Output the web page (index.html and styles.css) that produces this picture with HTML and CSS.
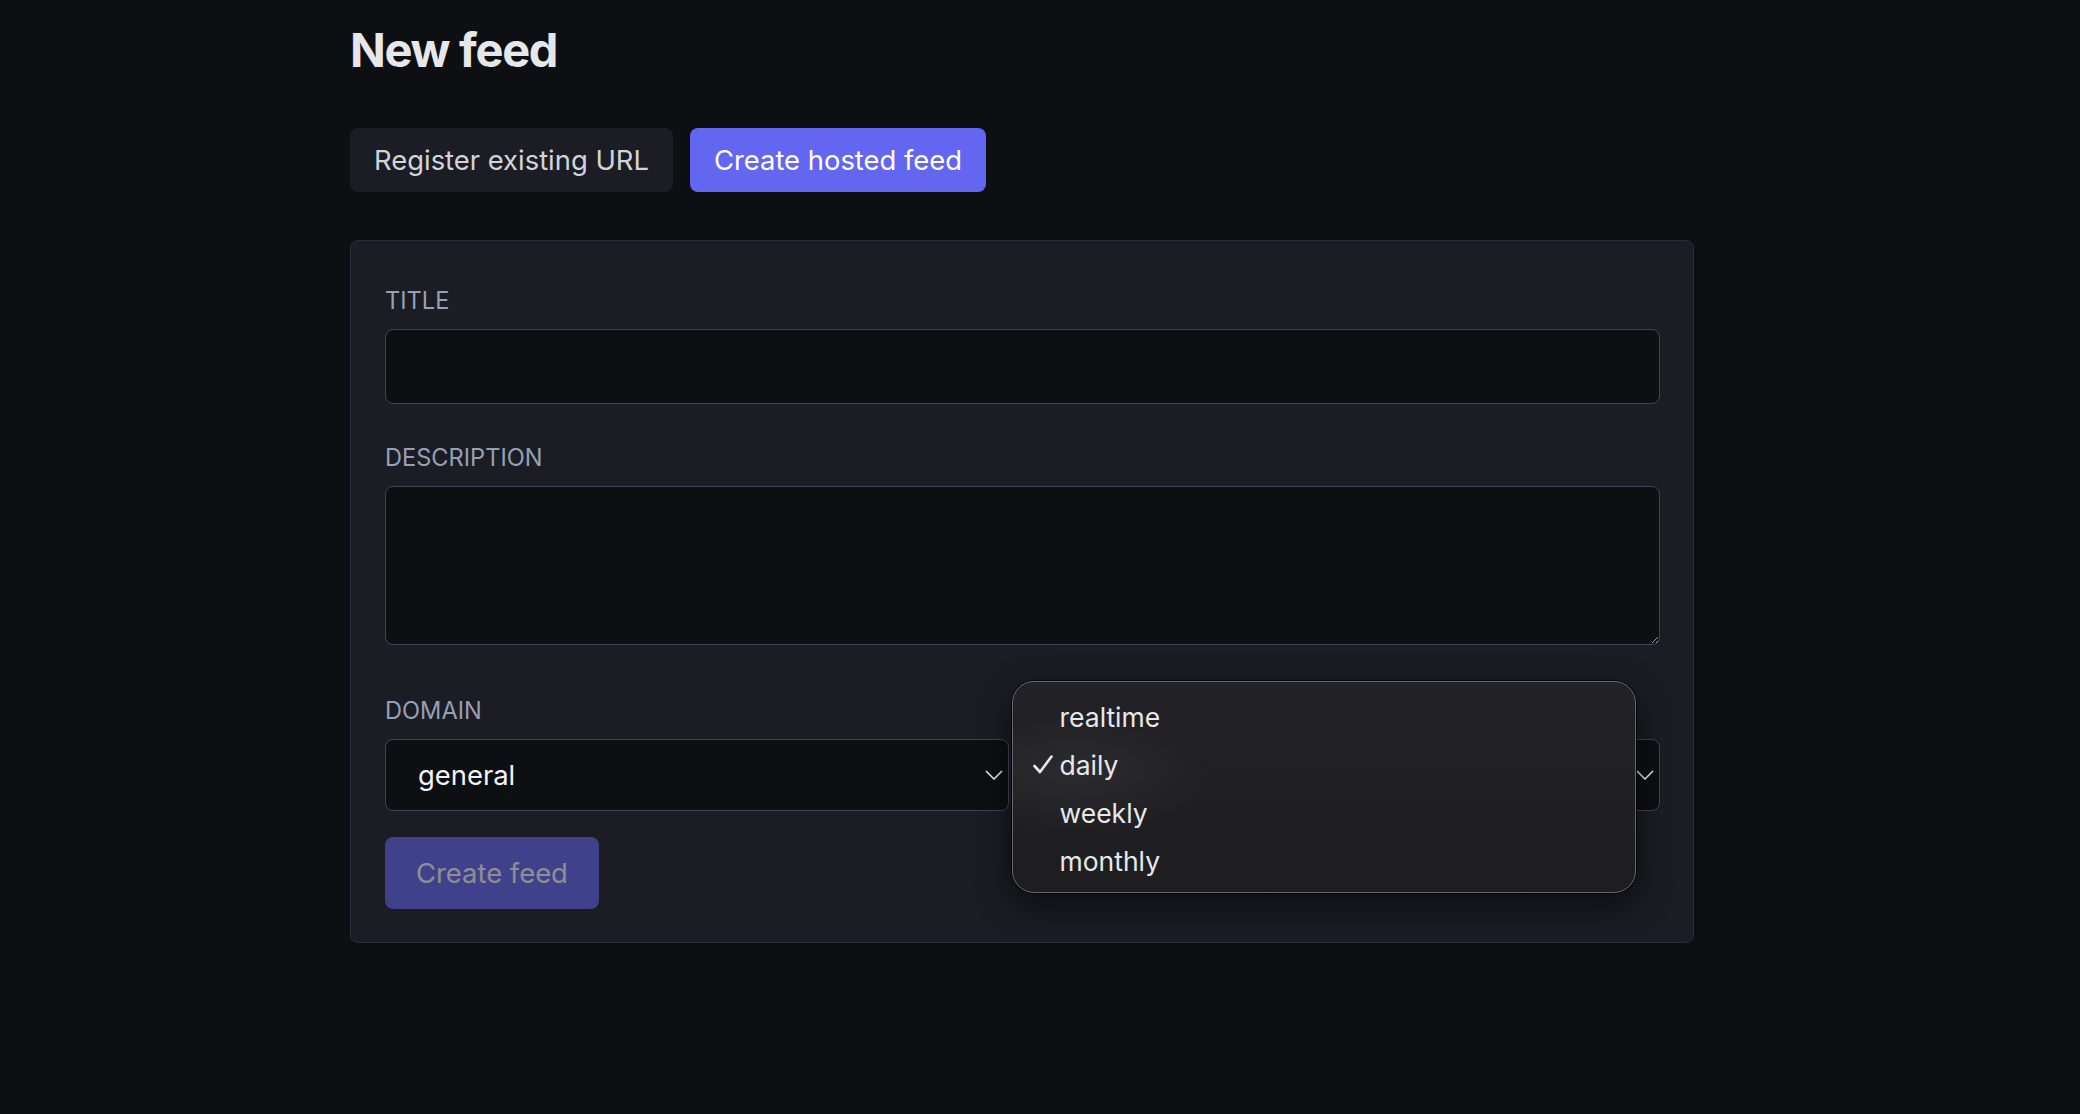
FILE: index.html
```html
<!DOCTYPE html>
<html>
 <head>
 	<title>New feed</title>
 	<link rel="stylesheet" href="styles.css">
 </head>
 <body>
 	<main class="page">
 		<h1 class="page-title">New feed</h1>
 		<div class="tabs">
 			<button class="tab" type="button">Register existing URL</button>
 			<button class="tab tab-active" type="button">Create hosted feed</button>
 		</div>
 		<form class="card">
 			<div class="field">
 				<label class="field-label">Title</label>
 				<input class="field-input field-text" type="text">
 			</div>
 			<div class="field">
 				<label class="field-label">Description</label>
 				<textarea class="field-input field-textarea"></textarea>
 			</div>
 			<div class="field-row">
 				<div class="field">
 					<label class="field-label">Domain</label>
 					<div class="select-wrap">
 						<select class="field-input field-select"><option>general</option></select>
 						<svg class="chevron" width="18" height="10" viewBox="0 0 18 10"><polyline points="1,1 9,9 17,1" /></svg>
 					</div>
 				</div>
 				<div class="field">
 					<!-- label sits under the open popup -->
 					<label class="field-label field-label-covered">Frequency</label>
 					<div class="select-wrap">
 						<select class="field-input field-select"><option>daily</option></select>
 						<svg class="chevron" width="18" height="10" viewBox="0 0 18 10"><polyline points="1,1 9,9 17,1" /></svg>
 						<ul class="menu">
 							<li class="menu-item">realtime</li>
 							<li class="menu-item menu-item-checked"><svg class="check" width="20" height="19" viewBox="0 0 20 19"><polyline points="1.5,11 7,17 18.5,1.5" /></svg>daily</li>
 							<li class="menu-item">weekly</li>
 							<li class="menu-item">monthly</li>
 						</ul>
 					</div>
 				</div>
 			</div>
 			<button class="submit" type="submit" disabled>Create feed</button>
 		</form>
 	</main>
 </body>
</html>
```

FILE: styles.css
```css
	html, body {
		margin: 0;
		background: #0e0f12;
		color-scheme: dark;
	}
	body {
		font-family: 'Inter', 'Noto Sans', sans-serif;
		color: #e5e7eb;
	}
	.page {
		width: 1344px;
		padding: 21px 0 40px 350px;
	}
	.page-title {
		margin: 0;
		font-size: 47px;
		line-height: 58px;
		font-weight: 700;
		letter-spacing: -1.3px;
		color: #e5e7eb;
	}

	/* mode switch */
	.tabs {
		display: flex;
		gap: 17px;
		margin-top: 49px;
	}
	.tab {
		height: 64px;
		padding: 0 24px;
		border: 0;
		border-radius: 8px;
		background: #1b1c24;
		color: #d1d5db;
		font-family: inherit;
		font-size: 27.4px;
		line-height: 32px;
	}
	.tab-active {
		background: #6366f1;
		color: #fff;
	}

	/* form card */
	.card {
		margin-top: 48px;
		padding: 42px 33px 33px 34px;
		background: #1b1c24;
		border: 1px solid #262d3d;
		border-radius: 8px;
	}
	.field {
		display: flex;
		flex-direction: column;
	}
	.field + .field {
		margin-top: 36px;
	}
	.field-label {
		font-size: 23.6px;
		line-height: 35px;
		text-transform: uppercase;
		color: #94a0b6;
		margin-bottom: 11px;
	}
	.field-label-covered {
		visibility: hidden;
	}
	.field-input {
		box-sizing: border-box;
		width: 100%;
		margin: 0;
		background: #0e0f12;
		border: 1px solid #3c4558;
		border-radius: 8px;
		color: #f3f4f6;
		font-family: inherit;
		font-size: 27.4px;
	}
	.field-text {
		height: 75px;
		padding: 0 32px;
	}
	.field-textarea {
		display: block;
		height: 159px;
		resize: vertical;
	}
	.field-row {
		display: grid;
		grid-template-columns: 1fr 1fr;
		gap: 28px;
		margin-top: 48px;
	}
	.field-row .field + .field {
		margin-top: 0;
	}
	.select-wrap {
		position: relative;
	}
	.field-select {
		-webkit-appearance: none;
		appearance: none;
		height: 72px;
		padding: 0 32px;
	}
	.chevron {
		position: absolute;
		right: 6px;
		top: 31px;
		fill: none;
		stroke: #e5e7eb;
		stroke-width: 1.6;
	}
	.submit {
		margin-top: 26px;
		height: 72px;
		padding: 0 31px;
		border: 0;
		border-radius: 8px;
		background: #6366f1;
		color: #fff;
		font-family: inherit;
		font-size: 27.4px;
		opacity: 0.5;
	}

	/* native popup menu */
	.menu {
		position: absolute;
		left: -25px;
		top: -58px;
		width: 624px;
		box-sizing: border-box;
		margin: 0;
		padding: 11px 0 7px;
		list-style: none;
		background: radial-gradient(ellipse 140px 60px at 60px 90px, rgba(255,255,255,0.05), transparent),
			linear-gradient(180deg, #222226, #1e1e21);
		border: 1.5px solid #66666b;
		border-radius: 22px;
		box-shadow: 0 0 0 1px rgba(0,0,0,0.7), 0 12px 32px rgba(0,0,0,0.55);
	}
	.menu-item {
		position: relative;
		height: 48px;
		line-height: 48px;
		padding-left: 47px;
		font-size: 26.5px;
		color: #e8e8ea;
	}
	.check {
		position: absolute;
		left: 20px;
		top: 14px;
		fill: none;
		stroke: #e8e8ea;
		stroke-width: 2.6;
		stroke-linecap: round;
		stroke-linejoin: round;
	}
```
